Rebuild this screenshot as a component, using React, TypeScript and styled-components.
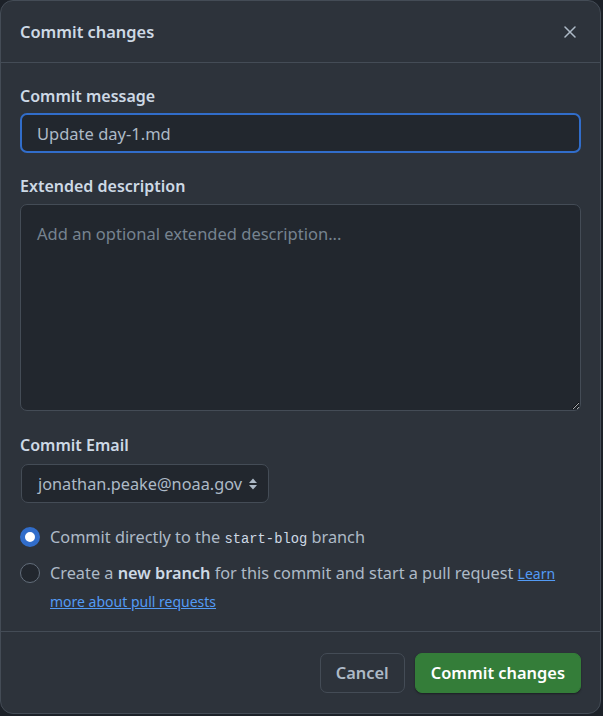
import React from 'react';
import styled, { createGlobalStyle } from 'styled-components';

const GlobalStyle = createGlobalStyle`
  html, body {
    margin: 0;
    padding: 0;
    background: #1c2128;
  }
  body {
    font-family: "Noto Sans", "Open Sans", sans-serif;
    color: #adbac7;
  }
`;

const Dialog = styled.div`
  box-sizing: border-box;
  width: 601px;
  height: 714px;
  background: #2d333b;
  border: 1px solid #444c56;
  border-radius: 13px;
  display: flex;
  flex-direction: column;
  overflow: hidden;
`;

const Header = styled.div`
  height: 61px;
  display: flex;
  align-items: center;
  justify-content: space-between;
  padding: 0 23px 0 19px;
  border-bottom: 1px solid #444c56;
`;

const Title = styled.h1`
  margin: 0;
  font-size: 16.4px;
  font-weight: 600;
  color: #cdd9e5;
`;

const CloseButton = styled.button`
  background: none;
  border: 0;
  padding: 0;
  width: 14px;
  height: 14px;
  display: flex;
  align-items: center;
  justify-content: center;
  color: #adbac7;
`;

const Body = styled.div`
  flex: 1;
  padding: 22px 19px 0 19px;
  display: flex;
  flex-direction: column;
`;

const Label = styled.label<{ $gap?: number }>`
  display: block;
  font-size: 16px;
  font-weight: 600;
  color: #cdd9e5;
  margin-bottom: ${p => p.$gap ?? 6}px;
`;

const Field = styled.div<{ $space?: number }>`
  margin-bottom: ${p => p.$space ?? 22}px;
`;

const TextInput = styled.input`
  box-sizing: border-box;
  width: 561px;
  height: 40px;
  background: #22272e;
  border: 2px solid #316dca;
  border-radius: 7px;
  padding: 0 15px;
  font-family: inherit;
  font-size: 16.5px;
  color: #adbac7;
  outline: none;
`;

const TextArea = styled.textarea`
  box-sizing: border-box;
  display: block;
  width: 561px;
  height: 207px;
  background: #22272e;
  border: 1px solid #444c56;
  border-radius: 7px;
  padding: 17px 16px;
  font-family: inherit;
  font-size: 16.5px;
  color: #adbac7;
  outline: none;
  resize: vertical;
  &::placeholder {
    color: #768390;
  }
`;

const Select = styled.div`
  box-sizing: border-box;
  width: 248px;
  height: 39px;
  margin-left: 1px;
  background: #22272e;
  border: 1px solid #444c56;
  border-radius: 7px;
  padding: 0 10px 0 16px;
  display: flex;
  align-items: center;
  justify-content: space-between;
  font-size: 16.3px;
  color: #adbac7;
`;

const Options = styled.div`
  display: flex;
  flex-direction: column;
  gap: 5px;
  margin-top: -2px;
`;

const Option = styled.div`
  display: flex;
  align-items: flex-start;
  gap: 10px;
  font-size: 16.3px;
  line-height: 28px;
  color: #adbac7;
`;

const Radio = styled.span<{ $checked?: boolean }>`
  flex: none;
  box-sizing: border-box;
  width: 20px;
  height: 20px;
  margin-top: 4px;
  border-radius: 50%;
  background: ${p => (p.$checked ? '#fff' : '#22272e')};
  border: ${p => (p.$checked ? '5.5px solid #316dca' : '1px solid #636e7b')};
`;

const Code = styled.code`
  font-family: "Liberation Mono", "DejaVu Sans Mono", monospace;
  font-size: 13.8px;
  color: #cdd9e5;
`;

const Strong = styled.strong`
  font-weight: 600;
  color: #cdd9e5;
`;

const Link = styled.a`
  font-size: 14px;
  line-height: 0;
  color: #539bf5;
  text-decoration: underline;
`;

const Footer = styled.div`
  border-top: 1px solid #444c56;
  height: 81px;
  display: flex;
  align-items: center;
  justify-content: flex-end;
  gap: 10px;
  padding: 0 19px;
`;

const Button = styled.button<{ $primary?: boolean }>`
  box-sizing: border-box;
  height: 40px;
  padding: 0 15px;
  border-radius: 7px;
  font-family: inherit;
  font-size: 16.4px;
  font-weight: 600;
  border: 1px solid ${p => (p.$primary ? '#347d39' : '#444c56')};
  background: ${p => (p.$primary ? '#347d39' : '#2d333b')};
  color: ${p => (p.$primary ? '#ffffff' : '#adbac7')};
  box-shadow: ${p => (p.$primary ? '0 1px 2px rgba(0,0,0,0.4)' : 'none')};
`;

const App: React.FC = () => {
  return (
    <>
      <GlobalStyle />
      <Dialog>
        <Header>
          <Title>Commit changes</Title>
          <CloseButton aria-label="Close">
            <svg width="12" height="12" viewBox="0 0 12 12" stroke="currentColor" strokeWidth="1.5" strokeLinecap="round">
              <path d="M1 1 11 11M11 1 1 11" />
            </svg>
          </CloseButton>
        </Header>
        <Body>
          <Field>
            <Label>Commit message</Label>
            <TextInput defaultValue="Update day-1.md" />
          </Field>
          <Field $space={23}>
            <Label $gap={7}>Extended description</Label>
            <TextArea placeholder="Add an optional extended description..." />
          </Field>
          <Field>
            <Label $gap={8}>Commit Email</Label>
            <Select>
              <span>jonathan.peake@noaa.gov</span>
              <svg width="10" height="14" viewBox="0 0 10 14" fill="currentColor">
                <path d="M5 1.5 9 6H1Z" />
                <path d="M5 12.5 1 8h8Z" />
              </svg>
            </Select>
          </Field>
          <Options>
            <Option>
              <Radio $checked />
              <span>
                Commit directly to the <Code>start-blog</Code> branch
              </span>
            </Option>
            <Option>
              <Radio />
              <span>
                Create a <Strong>new branch</Strong> for this commit and start a pull request{' '}
                <Link href="#">Learn more about pull requests</Link>
              </span>
            </Option>
          </Options>
        </Body>
        <Footer>
          <Button>Cancel</Button>
          <Button $primary>Commit changes</Button>
        </Footer>
      </Dialog>
    </>
  );
};

export default App;
